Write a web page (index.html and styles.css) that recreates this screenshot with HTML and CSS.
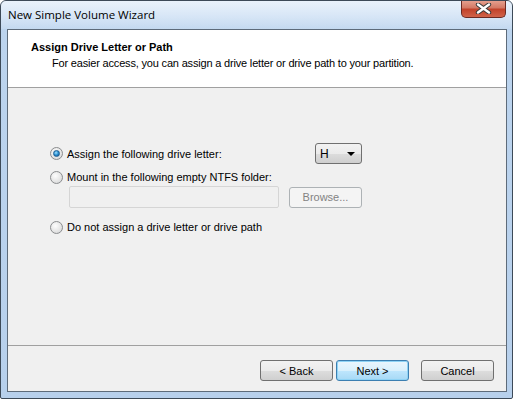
FILE: index.html
```html
<!DOCTYPE html>
<html lang="en">
<head>
  <meta charset="UTF-8" />
  <title>New Simple Volume Wizard</title>
  <link rel="stylesheet" href="styles.css">
</head>
<body>

<div class="window">
  <div class="titlebar">
    <span class="title">New Simple Volume Wizard</span>
    <button class="close" type="button">
      <svg width="17" height="11" viewBox="0 0 17 11">
        <path d="M3 1.5 L14 9.5 M14 1.5 L3 9.5" stroke="#3a3a3a" stroke-width="4.4" stroke-linecap="round" />
        <path d="M3 1.5 L14 9.5 M14 1.5 L3 9.5" stroke="#fff" stroke-width="2.4" stroke-linecap="round" />
      </svg>
    </button>
  </div>

  <div class="client">
    <div class="header">
      <h1>Assign Drive Letter or Path</h1>
      <p>For easier access, you can assign a drive letter or drive path to your partition.</p>
    </div>

    <div class="content">
      <div class="options">
        <div class="row">
          <label class="radio"><span class="dot checked"></span>Assign the following drive letter:</label>
          <div class="combo"><span>H</span><span class="arrow"></span></div>
        </div>
        <div class="row row-mount">
          <label class="radio"><span class="dot"></span>Mount in the following empty NTFS folder:</label>
        </div>
        <div class="row row-path">
          <input class="path" type="text" disabled />
          <button class="btn" type="button" disabled>Browse...</button>
        </div>
        <div class="row row-none">
          <label class="radio"><span class="dot"></span>Do not assign a drive letter or drive path</label>
        </div>
      </div>
    </div>

    <div class="footer">
      <button class="btn" type="button">&lt; Back</button>
      <button class="btn btn-default" type="button">Next &gt;</button>
      <button class="btn btn-cancel" type="button">Cancel</button>
    </div>
  </div>
</div>

</body>
</html>
```

FILE: styles.css
```css
body {
  margin: 0;
  font-family: "Liberation Sans", Arial, sans-serif;
  font-size: 11px;
  color: #000;
  background: #fff;
}
.window {
  width: 513px;
  height: 399px;
  box-sizing: border-box;
  border: 1px solid #3d4a58;
  border-radius: 6px 6px 2px 2px;
  background: linear-gradient(to bottom, #cfe2f7 0px, #bcd4ee 30px, #b7d0ec 100%);
  display: flex;
  flex-direction: column;
  overflow: hidden;
}
.titlebar {
  height: 28px;
  display: flex;
  align-items: flex-start;
  padding-left: 7px;
  padding-right: 6px;
  background: linear-gradient(to bottom, rgba(255,255,255,0.55), rgba(255,255,255,0.1));
}
.title {
  font-family: "Open Sans", "Noto Sans", sans-serif;
  font-size: 11.5px;
  line-height: 27px;
  color: #000;
}
.close {
  margin-left: auto;
  width: 45px;
  height: 18px;
  margin-top: -1px;
  padding: 0;
  border: 1px solid #6b2a22;
  border-top: none;
  border-radius: 0 0 5px 5px;
  background: linear-gradient(to bottom, #e8a493 0%, #d47a66 45%, #c2432b 55%, #d0634a 100%);
  display: flex;
  align-items: center;
  justify-content: center;
}
.client {
  flex: 1;
  margin: 0 5px 6px 6px;
  border: 1px solid #5d6b7a;
  background: #f0f0f0;
  display: flex;
  flex-direction: column;
}
.header {
  height: 58px;
  background: #fff;
  border-bottom: 1px solid #a0a0a0;
  padding-left: 23px;
  box-sizing: border-box;
}
.header h1 {
  margin: 0;
  padding-top: 10px;
  font-size: 11px;
  font-weight: bold;
  line-height: 14px;
}
.header p {
  margin: 2px 0 0 21px;
  line-height: 14px;
  letter-spacing: -0.18px;
}
.content {
  flex: 1;
  padding: 55px 0 0 42px;
}
.options {
  width: 312px;
}
.row {
  display: flex;
  align-items: center;
  justify-content: space-between;
}
.row-mount {
  margin-top: 5px;
  height: 16px;
}
.row-path {
  margin-top: 1px;
  padding-left: 19px;
}
.row-none {
  margin-top: 11px;
  height: 16px;
}
.radio {
  display: flex;
  align-items: center;
  gap: 4px;
}
.dot {
  width: 11px;
  height: 11px;
  border-radius: 50%;
  border: 1px solid #8a8c8e;
  background: radial-gradient(circle at 40% 35%, #fdfdfd 0%, #e6e6e6 55%, #cfd1d3 100%);
  display: flex;
  align-items: center;
  justify-content: center;
}
.dot.checked::after {
  content: "";
  width: 5px;
  height: 5px;
  border-radius: 50%;
  background: radial-gradient(circle at 40% 35%, #9fe0ff 0%, #2a8fd1 50%, #0c4f8a 100%);
  border: 1px solid #1d5e93;
}
.combo {
  width: 47px;
  height: 21px;
  box-sizing: border-box;
  border: 1px solid #707070;
  border-radius: 3px;
  background: linear-gradient(to bottom, #f2f2f2 0%, #ebebeb 50%, #dddddd 51%, #cfcfcf 100%);
  display: flex;
  align-items: center;
  justify-content: space-between;
  padding: 0 6px 0 4px;
  font-size: 12px;
}
.arrow {
  width: 0;
  height: 0;
  border-left: 4px solid transparent;
  border-right: 4px solid transparent;
  border-top: 4px solid #000;
}
.path {
  width: 210px;
  height: 22px;
  box-sizing: border-box;
  border: 1px solid #d5d5d5;
  border-radius: 2px;
  background: #f0f0f0;
  margin: 0;
}
.btn {
  width: 73px;
  height: 21px;
  padding: 0;
  box-sizing: border-box;
  border: 1px solid #707070;
  border-radius: 3px;
  font-family: inherit;
  font-size: 11px;
  color: #000;
  background: linear-gradient(to bottom, #f2f2f2 0%, #ebebeb 50%, #dddddd 51%, #cfcfcf 100%);
}
.btn:disabled {
  border-color: #adb2b5;
  color: #838383;
  background: #f4f4f4;
}
.footer {
  height: 46px;
  box-sizing: border-box;
  border-top: 1px solid #a0a0a0;
  display: flex;
  justify-content: flex-end;
  align-items: flex-start;
  padding: 14px 12px 0 0;
  gap: 3px;
}
.btn-default {
  border-color: #3c7fb1;
  background: linear-gradient(to bottom, #eaf6fd 0%, #d9f0fc 50%, #bee6fd 51%, #a7d9f5 100%);
  box-shadow: inset 0 0 0 1px #8fd3f5;
}
.btn-cancel {
  margin-left: 9px;
}
```
